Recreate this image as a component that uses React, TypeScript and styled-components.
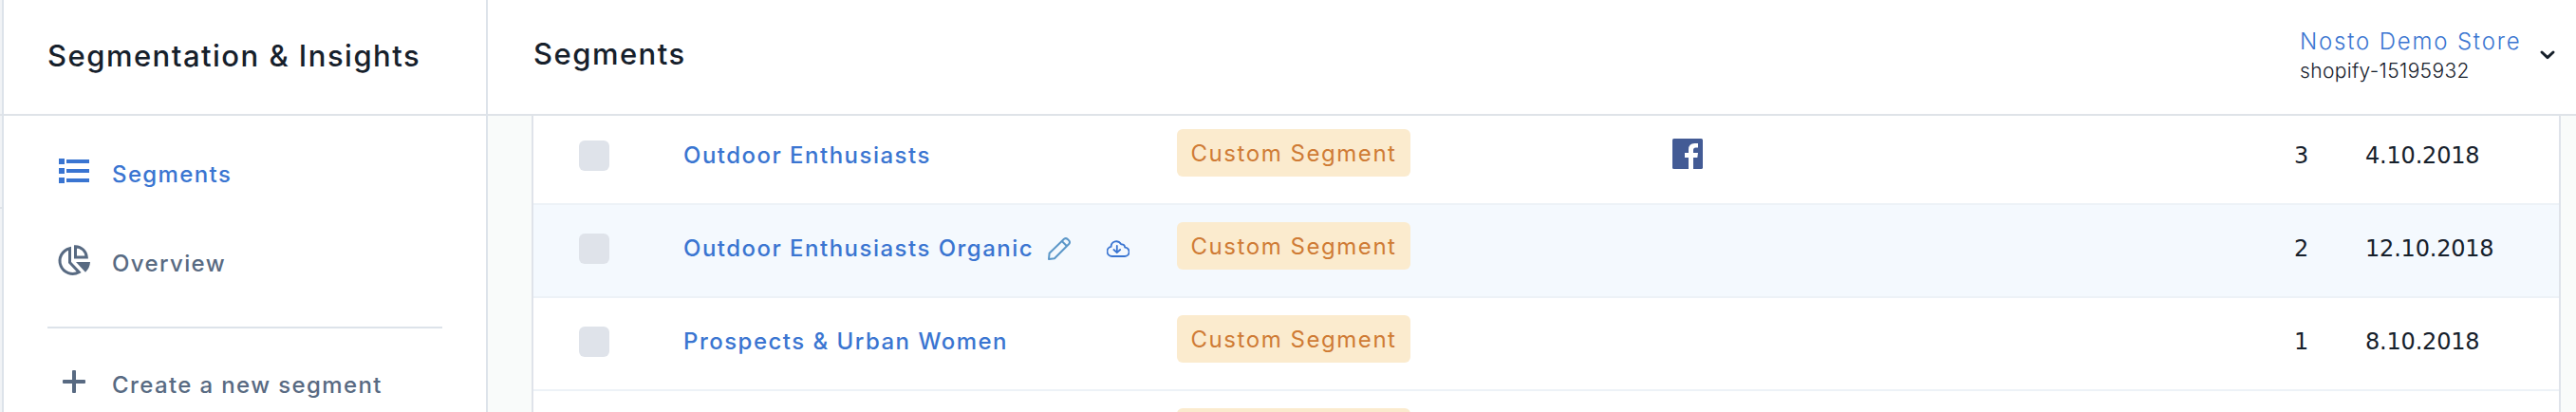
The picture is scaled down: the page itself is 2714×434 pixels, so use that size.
import styled, { createGlobalStyle } from "styled-components"

const GlobalStyle = createGlobalStyle`
  * { box-sizing: border-box; }
  body {
    margin: 0;
    background: #f9fbfa;
    overflow: hidden;
    font-family: Inter, "Liberation Sans", sans-serif;
    color: #16202b;
  }
`

const Page = styled.div`
  display: flex;
  width: 2714px;
  height: 434px;
  overflow: hidden;
`

// visible edge of the collapsed app menu
const Rail = styled.div`
  flex: none;
  width: 4px;
  background: #f1f3f6;
  border-right: 2px solid #dde3ea;
`

const RailCell = styled.div<{ $height: number }>`
  height: ${(p) => p.$height}px;
  border-bottom: 2px solid #dfe3e8;
`

const Sidebar = styled.aside`
  flex: none;
  width: 510px;
  background: #fff;
  border-right: 2px solid #dde3ea;
`

const SidebarHeader = styled.div`
  height: 122px;
  margin-bottom: 12px;
  padding: 40px 0 0 46px;
  border-bottom: 2px solid #dfe3e8;
`

const Title = styled.h1`
  margin: 0;
  font-size: 31px;
  line-height: 38px;
  font-weight: 500;
  letter-spacing: 1.48px;
  white-space: nowrap;
`

const NavItem = styled.a<{ $active?: boolean }>`
  display: flex;
  align-items: center;
  height: 94px;
  padding-left: 54px;
  font-size: 24px;
  font-weight: 500;
  letter-spacing: 1.38px;
  color: ${(p) => (p.$active ? "#3a75d1" : "#586a82")};
  white-space: nowrap;
  svg { flex: none; margin-right: 20px; }
  span { padding-top: 5px; }
`

const Divider = styled.div`
  height: 2px;
  margin: 22px 46px 10px;
  background: #dde3ea;
`

const Main = styled.main`
  flex: 1;
  display: flex;
  flex-direction: column;
  min-width: 0;
`

const TopBar = styled.header`
  display: flex;
  justify-content: space-between;
  flex: none;
  height: 122px;
  padding: 38px 20px 0 48px;
  background: #fff;
  border-bottom: 2px solid #dfe3e8;
`

const Account = styled.div`
  display: flex;
  margin-top: -9px;
  svg { flex: none; margin-top: 23px; }
`

const Names = styled.div`
  width: 251px;
  white-space: nowrap;
`

const StoreName = styled.div`
  font-size: 24px;
  line-height: 30px;
  font-weight: 300;
  letter-spacing: 1.82px;
  color: #3a75d1;
`

const StoreId = styled.div`
  font-size: 21px;
  line-height: 32px;
  font-weight: 300;
  letter-spacing: 0.35px;
`

const Table = styled.div`
  flex: 1;
  min-height: 0;
  margin: 0 16px 0 46px;
  border: solid #dfe3ea;
  border-width: 0 2px;
  background: #fff;
  overflow: hidden;
`

// the list is scrolled a little under the top bar
const Rows = styled.div`
  margin-top: -4px;
`

const Row = styled.div<{ $hover?: boolean }>`
  display: grid;
  grid-template-columns: 110px 520px 522px 655px 75px 1fr;
  height: 98px;
  padding-left: 48px;
  border-bottom: 2px solid #edf2f7;
  background: ${(p) => (p.$hover ? "#f4f9fe" : "#fff")};
`

const Checkbox = styled.span`
  width: 32px;
  height: 32px;
  margin-top: 30px;
  border-radius: 6px;
  background: #dfe3ea;
`

const Name = styled.div`
  display: flex;
  padding: 31px 0 0;
  font-size: 24px;
  line-height: 30px;
  font-weight: 500;
  letter-spacing: 1.48px;
  color: #3a75d1;
  white-space: nowrap;
`

const Actions = styled.span`
  display: flex;
  align-items: flex-start;
  gap: 38px;
  padding: 3px 0 0 15px;
`

const Badge = styled.span`
  width: 246px;
  height: 50px;
  margin-top: 18px;
  border-radius: 6px;
  background: #fbebce;
  color: #cf7b35;
  font-size: 24px;
  line-height: 52px;
  letter-spacing: 1.55px;
  text-align: center;
  white-space: nowrap;
`

const Channel = styled.div`
  padding-top: 28px;
`

const Num = styled.div`
  padding-top: 31px;
  font-family: "DejaVu Sans", sans-serif;
  font-size: 24px;
  line-height: 30px;
  letter-spacing: -0.2px;
  white-space: nowrap;
`

const ListIcon = () => (
  <svg width="40" height="40" viewBox="0 0 40 40" fill="currentColor">
    <path d="M4 6h6v6H4zM4 16h6v6H4zM4 26h6v6H4zM12 7h24v4H12zM12 17h24v4H12zM12 27h24v4H12z" />
  </svg>
)

const PieIcon = () => (
  <svg width="40" height="40" viewBox="0 0 40 40" fill="none" stroke="currentColor" strokeWidth="3">
    <path d="M15.5 6.7A13.5 13.5 0 1 0 25.2 31.6L15.5 21.5Z" />
    <path d="M21.5 4.7V16H33.3A12 12 0 0 0 21.5 4.7Z" />
    <path d="M22 21H37A16 16 0 0 1 32 31.7Z" fill="currentColor" stroke="none" />
  </svg>
)

const PlusIcon = () => (
  <svg width="40" height="40" viewBox="0 0 40 40" fill="currentColor">
    <rect x="8" y="17" width="24" height="4" rx="1" />
    <rect x="18" y="7" width="4" height="24" rx="1" />
  </svg>
)

const PencilIcon = () => (
  <svg width="24" height="24" viewBox="0 0 24 24" fill="none" stroke="#5b97c8" strokeWidth="2" strokeLinejoin="round">
    <path d="M1 23L1.6 16.8L17 1.8Q19 0.4 20.8 2L22.2 3.4Q23.8 5.2 22.2 7L7 22.3Z" />
    <path d="M15 4.2L19.8 9" />
  </svg>
)

const CloudIcon = () => (
  <svg width="24" height="24" viewBox="0 0 24 24" fill="none" stroke="#3a75d1" strokeWidth="1.8" strokeLinecap="round" strokeLinejoin="round">
    <path d="M5.6 20H18.6A4.7 4.7 0 0 0 19.2 10.6Q18.8 6.9 15.2 7.4A5.6 5.6 0 0 0 4.6 9.9A5.1 5.1 0 0 0 5.6 20Z" />
    <path d="M10.8 8.8V15.8M7.4 13L10.8 16.2L14.2 13" />
  </svg>
)

const FacebookIcon = () => (
  <svg width="32" height="32" viewBox="0 0 32 32">
    <rect width="32" height="32" rx="1.6" fill="#435b95" />
    <path fill="#fff" d="M17 32V20H13V15H17V11.5Q17 5 23.5 5H27V9.5H24.5Q22 9.5 22 12V15H27L26.3 20H22V32Z" />
  </svg>
)

const Chevron = () => (
  <svg width="20" height="14" viewBox="0 0 20 14" fill="none" stroke="#16202b" strokeWidth="3" strokeLinecap="round" strokeLinejoin="round">
    <path d="M4 3L10 8.6L16 3" />
  </svg>
)

const segments = [
  { name: "Outdoor Enthusiasts", type: "Custom Segment", count: 3, date: "4.10.2018", facebook: true },
  { name: "Outdoor Enthusiasts Organic", type: "Custom Segment", count: 2, date: "12.10.2018", hover: true },
  { name: "Prospects & Urban Women", type: "Custom Segment", count: 1, date: "8.10.2018" },
  {},
]

export default () => {
  return (
    <Page>
      <GlobalStyle />
      <Rail>
        <RailCell $height={122} />
        <RailCell $height={98} />
      </Rail>
      <Sidebar>
        <SidebarHeader>
          <Title>Segmentation & Insights</Title>
        </SidebarHeader>
        <NavItem $active><ListIcon /><span>Segments</span></NavItem>
        <NavItem><PieIcon /><span>Overview</span></NavItem>
        <Divider />
        <NavItem><PlusIcon /><span>Create a new segment</span></NavItem>
      </Sidebar>
      <Main>
        <TopBar>
          <Title>Segments</Title>
          <Account>
            <Names>
              <StoreName>Nosto Demo Store</StoreName>
              <StoreId>shopify-15195932</StoreId>
            </Names>
            <Chevron />
          </Account>
        </TopBar>
        <Table>
          <Rows>
            {segments.map((s, i) => (
              <Row key={i} $hover={s.hover}>
                <Checkbox />
                <Name>
                  {s.name}
                  {s.hover && <Actions><PencilIcon /><CloudIcon /></Actions>}
                </Name>
                <Badge>{s.type}</Badge>
                <Channel>{s.facebook && <FacebookIcon />}</Channel>
                <Num>{s.count}</Num>
                <Num>{s.date}</Num>
              </Row>
            ))}
          </Rows>
        </Table>
      </Main>
    </Page>
  )
}
